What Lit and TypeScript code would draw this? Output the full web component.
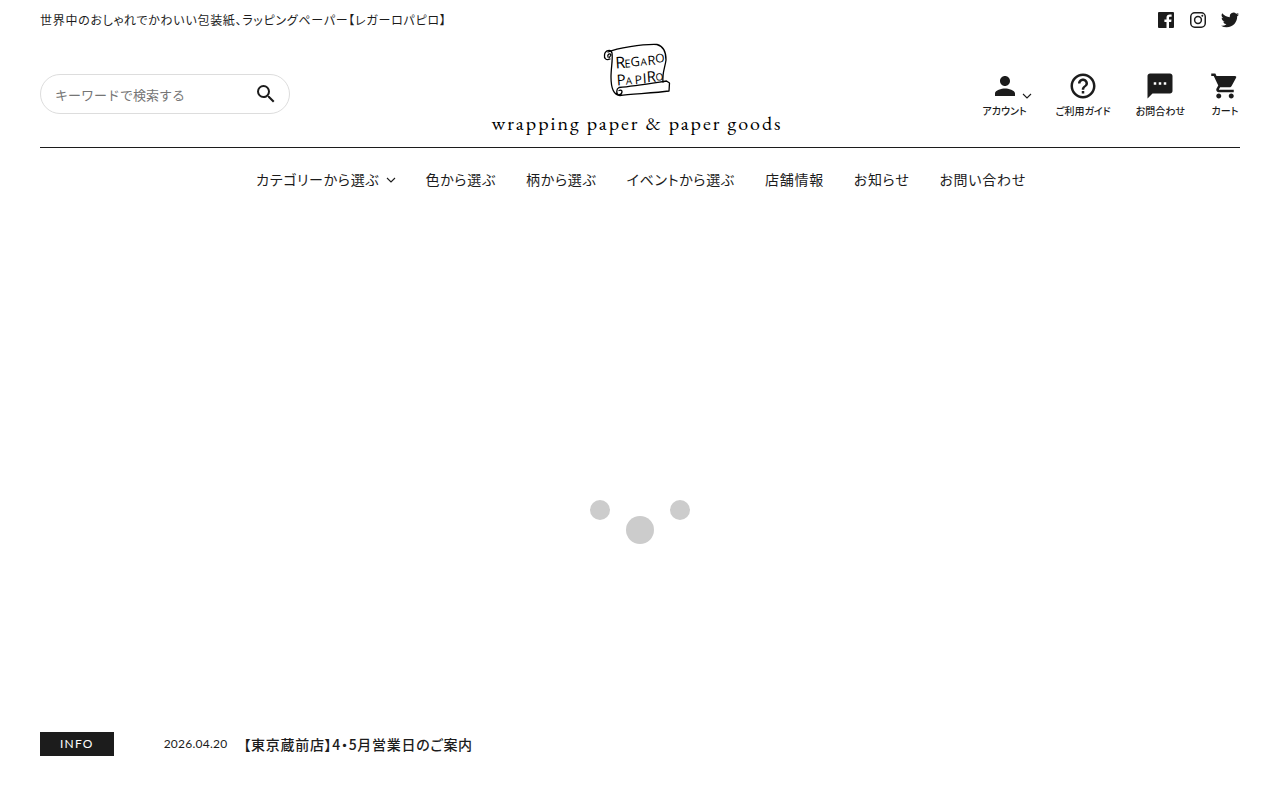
import { LitElement, html, css, svg } from "lit";
import { customElement } from "lit/decorators.js";

const icons = {
  search: svg`<path d="M15.5 14h-.79l-.28-.27A6.471 6.471 0 0 0 16 9.5 6.5 6.5 0 1 0 9.5 16c1.61 0 3.09-.59 4.23-1.57l.27.28v.79l5 4.99L20.49 19l-4.99-5zm-6 0C7.01 14 5 11.99 5 9.5S7.01 5 9.5 5 14 7.01 14 9.5 11.99 14 9.5 14z"/>`,
  person: svg`<path d="M12 12c2.21 0 4-1.79 4-4s-1.79-4-4-4-4 1.79-4 4 1.79 4 4 4zm0 2c-2.67 0-8 1.34-8 4v2h16v-2c0-2.66-5.33-4-8-4z"/>`,
  help: svg`<path d="M11 18h2v-2h-2v2zm1-16C6.48 2 2 6.48 2 12s4.48 10 10 10 10-4.48 10-10S17.52 2 12 2zm0 18c-4.41 0-8-3.59-8-8s3.59-8 8-8 8 3.59 8 8-3.59 8-8 8zm0-14c-2.21 0-4 1.79-4 4h2c0-1.1.9-2 2-2s2 .9 2 2c0 2-3 1.75-3 5h2c0-2.25 3-2.5 3-5 0-2.21-1.79-4-4-4z"/>`,
  sms: svg`<path d="M20 2H4c-1.1 0-1.99.9-1.99 2L2 22l4-4h14c1.1 0 2-.9 2-2V4c0-1.1-.9-2-2-2zM9 11H7V9h2v2zm4 0h-2V9h2v2zm4 0h-2V9h2v2z"/>`,
  cart: svg`<path d="M7 18c-1.1 0-1.99.9-1.99 2S5.9 22 7 22s2-.9 2-2-.9-2-2-2zM1 2v2h2l3.6 7.59-1.35 2.45c-.16.28-.25.61-.25.96 0 1.1.9 2 2 2h12v-2H7.42c-.14 0-.25-.11-.25-.25l.03-.12.9-1.63h7.45c.75 0 1.41-.41 1.75-1.03l3.58-6.49A1 1 0 0 0 20 4H5.21l-.94-2H1zm16 16c-1.1 0-1.99.9-1.99 2s.89 2 1.99 2 2-.9 2-2-.9-2-2-2z"/>`,
  facebook: svg`<path fill-rule="evenodd" d="M1 0h14a1 1 0 0 1 1 1v14a1 1 0 0 1-1 1h-4V9.900h2.200l.3-2.500H11V6c0-.8.3-1.300 1.300-1.300h1.300V2.500C13.200 2.400 12.500 2.400 11.700 2.400 9.800 2.400 8.500 3.500 8.500 5.500v1.900H6.400V9.900h2.100V16H1a1 1 0 0 1-1-1V1a1 1 0 0 1 1-1z"/>`,
  instagram: svg`<rect x=".75" y=".75" width="14.500" height="14.500" rx="4" fill="none" stroke="currentColor" stroke-width="1.500"/><circle cx="8" cy="8" r="3.400" fill="none" stroke="currentColor" stroke-width="1.500"/><circle cx="12.300" cy="3.700" r="1"/>`,
  twitter: svg`<path d="M24 4.557a9.830 9.830 0 0 1-2.828.775 4.932 4.932 0 0 0 2.165-2.724 9.864 9.864 0 0 1-3.127 1.195 4.916 4.916 0 0 0-8.384 4.482C7.691 8.094 4.066 6.130 1.640 3.161a4.916 4.916 0 0 0 1.523 6.574 4.903 4.903 0 0 1-2.229-.616c-.054 2.281 1.581 4.415 3.949 4.890a4.935 4.935 0 0 1-2.224.084 4.928 4.928 0 0 0 4.600 3.419A9.900 9.900 0 0 1 0 19.540a13.940 13.940 0 0 0 7.548 2.212c9.142 0 14.307-7.721 13.995-14.646A10.025 10.025 0 0 0 24 4.557z"/>`,
};

const chevron = html`<svg class="chevron" viewBox="0 0 10 6" aria-hidden="true"><path d="M1 1l4 4 4-4" fill="none" stroke="currentColor" stroke-width="1.100"/></svg>`;

@customElement("app-root")
export class AppRoot extends LitElement {
  static styles = css`
    :host {
      display: block;
      color: #1c1c1c;
      background: #fff;
      font-family: "Noto Sans CJK JP", sans-serif;
      font-size: 14px;
      line-height: 24px;
      letter-spacing: 0.05em;
      font-feature-settings: "palt";
    }
    * { box-sizing: border-box; }
    a { color: inherit; text-decoration: none; }
    svg { display: block; fill: currentColor; }
    h1, p, ul { margin: 0; padding: 0; list-style: none; }
    header, .info { padding: 0 40px; }
    .top {
      display: flex;
      justify-content: space-between;
      align-items: center;
      height: 40px;
    }
    .lead { font-size: 12px; font-weight: 400; letter-spacing: 0.06em; }
    .social { display: flex; gap: 14px; padding-right: 1px; }
    .social a { display: grid; place-items: center; width: 18px; height: 18px; }
    .social svg { width: 16px; height: 16px; }
    .social .bird { width: 18px; height: 18px; }
    .main {
      display: grid;
      grid-template-columns: 1fr auto 1fr;
      align-items: center;
      height: 108px;
      border-bottom: 1px solid #1c1c1c;
    }
    .search {
      display: flex;
      align-items: center;
      width: 250px;
      height: 40px;
      padding: 0 11px 0 14px;
      border: 1px solid #ddd;
      border-radius: 20px;
    }
    .search input {
      flex: 1;
      min-width: 0;
      padding: 2px 0 0;
      border: 0;
      outline: 0;
      background: none;
      color: inherit;
      font: 13px/24px "Noto Sans CJK JP", sans-serif;
    }
    .search input::placeholder { color: #757575; }
    .search button { padding: 0; border: 0; background: none; color: inherit; cursor: pointer; }
    .search svg { width: 24px; height: 24px; }
    .brand {
      display: flex;
      flex-direction: column;
      align-items: center;
      padding: 0 6px 8px 0;
      color: #000;
    }
    .mark { width: 68px; height: 54px; }
    .mark text { font-family: "Open Sans", sans-serif; font-weight: 400; letter-spacing: 0; }
    .tagline {
      margin-top: 12px;
      font: 20px/28px "EB Garamond", "Liberation Serif", serif;
      letter-spacing: 2px;
    }
    .tools { display: flex; justify-content: flex-end; gap: 25px; padding-top: 4px; }
    .tools a {
      position: relative;
      display: flex;
      flex-direction: column;
      align-items: center;
      font-size: 10px;
      font-weight: 500;
      line-height: 20px;
      letter-spacing: 0;
    }
    .tools svg { width: 30px; height: 30px; }
    .tools .account { margin-right: 4px; }
    .tools .chevron { position: absolute; right: -5px; top: 22px; }
    .tools .chevron, nav .chevron { width: 10px; height: 6px; }
    nav ul {
      display: flex;
      flex-wrap: wrap;
      justify-content: center;
      gap: 0 30px;
      padding: 19px 0 21px 2px;
    }
    nav a { display: flex; align-items: center; gap: 6px; }
    nav .chevron { margin-top: 2px; }
    .hero { display: grid; place-items: center; height: 520px; padding-top: 100px; }
    .loader { display: flex; align-items: flex-start; gap: 16px; }
    .dot { width: 20px; height: 20px; border-radius: 50%; background: #ccc; }
    .dot.big { width: 28px; height: 28px; margin-top: 16px; }
    .info { display: flex; align-items: center; padding-bottom: 44px; }
    .label, .info time { font-family: Lato, sans-serif; font-size: 12px; }
    .label {
      padding: 0 20px;
      margin-right: 50px;
      background: #1c1c1c;
      color: #fff;
      letter-spacing: 0.1em;
    }
    .info time { margin-right: 16px; letter-spacing: 0.02em; }
    .news { font-weight: 500; }
  `;

  private tools = [
    { name: "アカウント", icon: icons.person, menu: true },
    { name: "ご利用ガイド", icon: icons.help },
    { name: "お問合わせ", icon: icons.sms },
    { name: "カート", icon: icons.cart },
  ];

  private links = ["カテゴリーから選ぶ", "色から選ぶ", "柄から選ぶ", "イベントから選ぶ", "店舗情報", "お知らせ", "お問い合わせ"];

  render() {
    return html`
      <header>
        <div class="top">
          <h1 class="lead">世界中のおしゃれでかわいい包装紙、ラッピングペーパー【レガーロパピロ】</h1>
          <div class="social">
            <a href="#" aria-label="Facebook"><svg viewBox="0 0 16 16">${icons.facebook}</svg></a>
            <a href="#" aria-label="Instagram"><svg viewBox="0 0 16 16">${icons.instagram}</svg></a>
            <a href="#" aria-label="Twitter"><svg class="bird" viewBox="0 0 24 24">${icons.twitter}</svg></a>
          </div>
        </div>
        <div class="main">
          <form class="search" role="search" @submit=${(e: Event) => e.preventDefault()}>
            <input type="text" aria-label="キーワード" placeholder="キーワードで検索する" />
            <button aria-label="検索"><svg viewBox="0 0 24 24">${icons.search}</svg></button>
          </form>
          <a class="brand" href="#">
            <svg class="mark" viewBox="0 0 68 54">
              <g fill="none" stroke="currentColor" stroke-width="1.300" stroke-linecap="round" stroke-linejoin="round">
                <path d="M5 9C14 5 39 1 54 1.500C60 3 63 9 63 17C62 25 59 30 60 39"/>
                <path d="M7 16C3 18 1 15 1.500 12C2 7 8 6 9 10C10 16 8 25 8 34C8 42 9 52 17 52.500C27 51 52 50 66 48L66.500 40L63.500 38C50 40 31 43 16 44.500C13 46 13 51 16 52C20 51 20 46 16 47.500"/>
                <path d="M5 14C4 11 7 10 8 12L6 15"/>
              </g>
              <g transform="rotate(-4 34 27)">
                <text x="13" y="24" font-size="16">R</text><text x="22" y="24" font-size="11">E</text><text x="28" y="23" font-size="13">G</text><text x="38" y="23" font-size="10">A</text><text x="45" y="23" font-size="13">R</text><text x="53" y="21" font-size="12">O</text>
                <text x="13" y="41" font-size="15">P</text><text x="22" y="41" font-size="10">A</text><text x="31" y="41" font-size="12">P</text><text x="39" y="41" font-size="14">I</text><text x="43" y="40" font-size="15">R</text><text x="52" y="39" font-size="10">O</text>
              </g>
            </svg>
            <span class="tagline">wrapping paper &amp; paper goods</span>
          </a>
          <div class="tools">
            ${this.tools.map(
              (t) => html`<a href="#" class=${t.menu ? "account" : ""}><svg viewBox="0 0 24 24" aria-hidden="true">${t.icon}</svg><span>${t.name}</span>${t.menu ? chevron : ""}</a>`
            )}
          </div>
        </div>
        <nav>
          <ul>
            ${this.links.map((l, i) => html`<li><a href="#">${l}${i === 0 ? chevron : ""}</a></li>`)}
          </ul>
        </nav>
      </header>
      <section class="hero">
        <div class="loader" role="status" aria-label="読み込み中">
          <span class="dot"></span><span class="dot big"></span><span class="dot"></span>
        </div>
      </section>
      <section class="info">
        <span class="label">INFO</span>
        <time datetime="2026-04-20">2026.04.20</time>
        <a class="news" href="#">【東京蔵前店】4・5月営業日のご案内</a>
      </section>
    `;
  }
}
